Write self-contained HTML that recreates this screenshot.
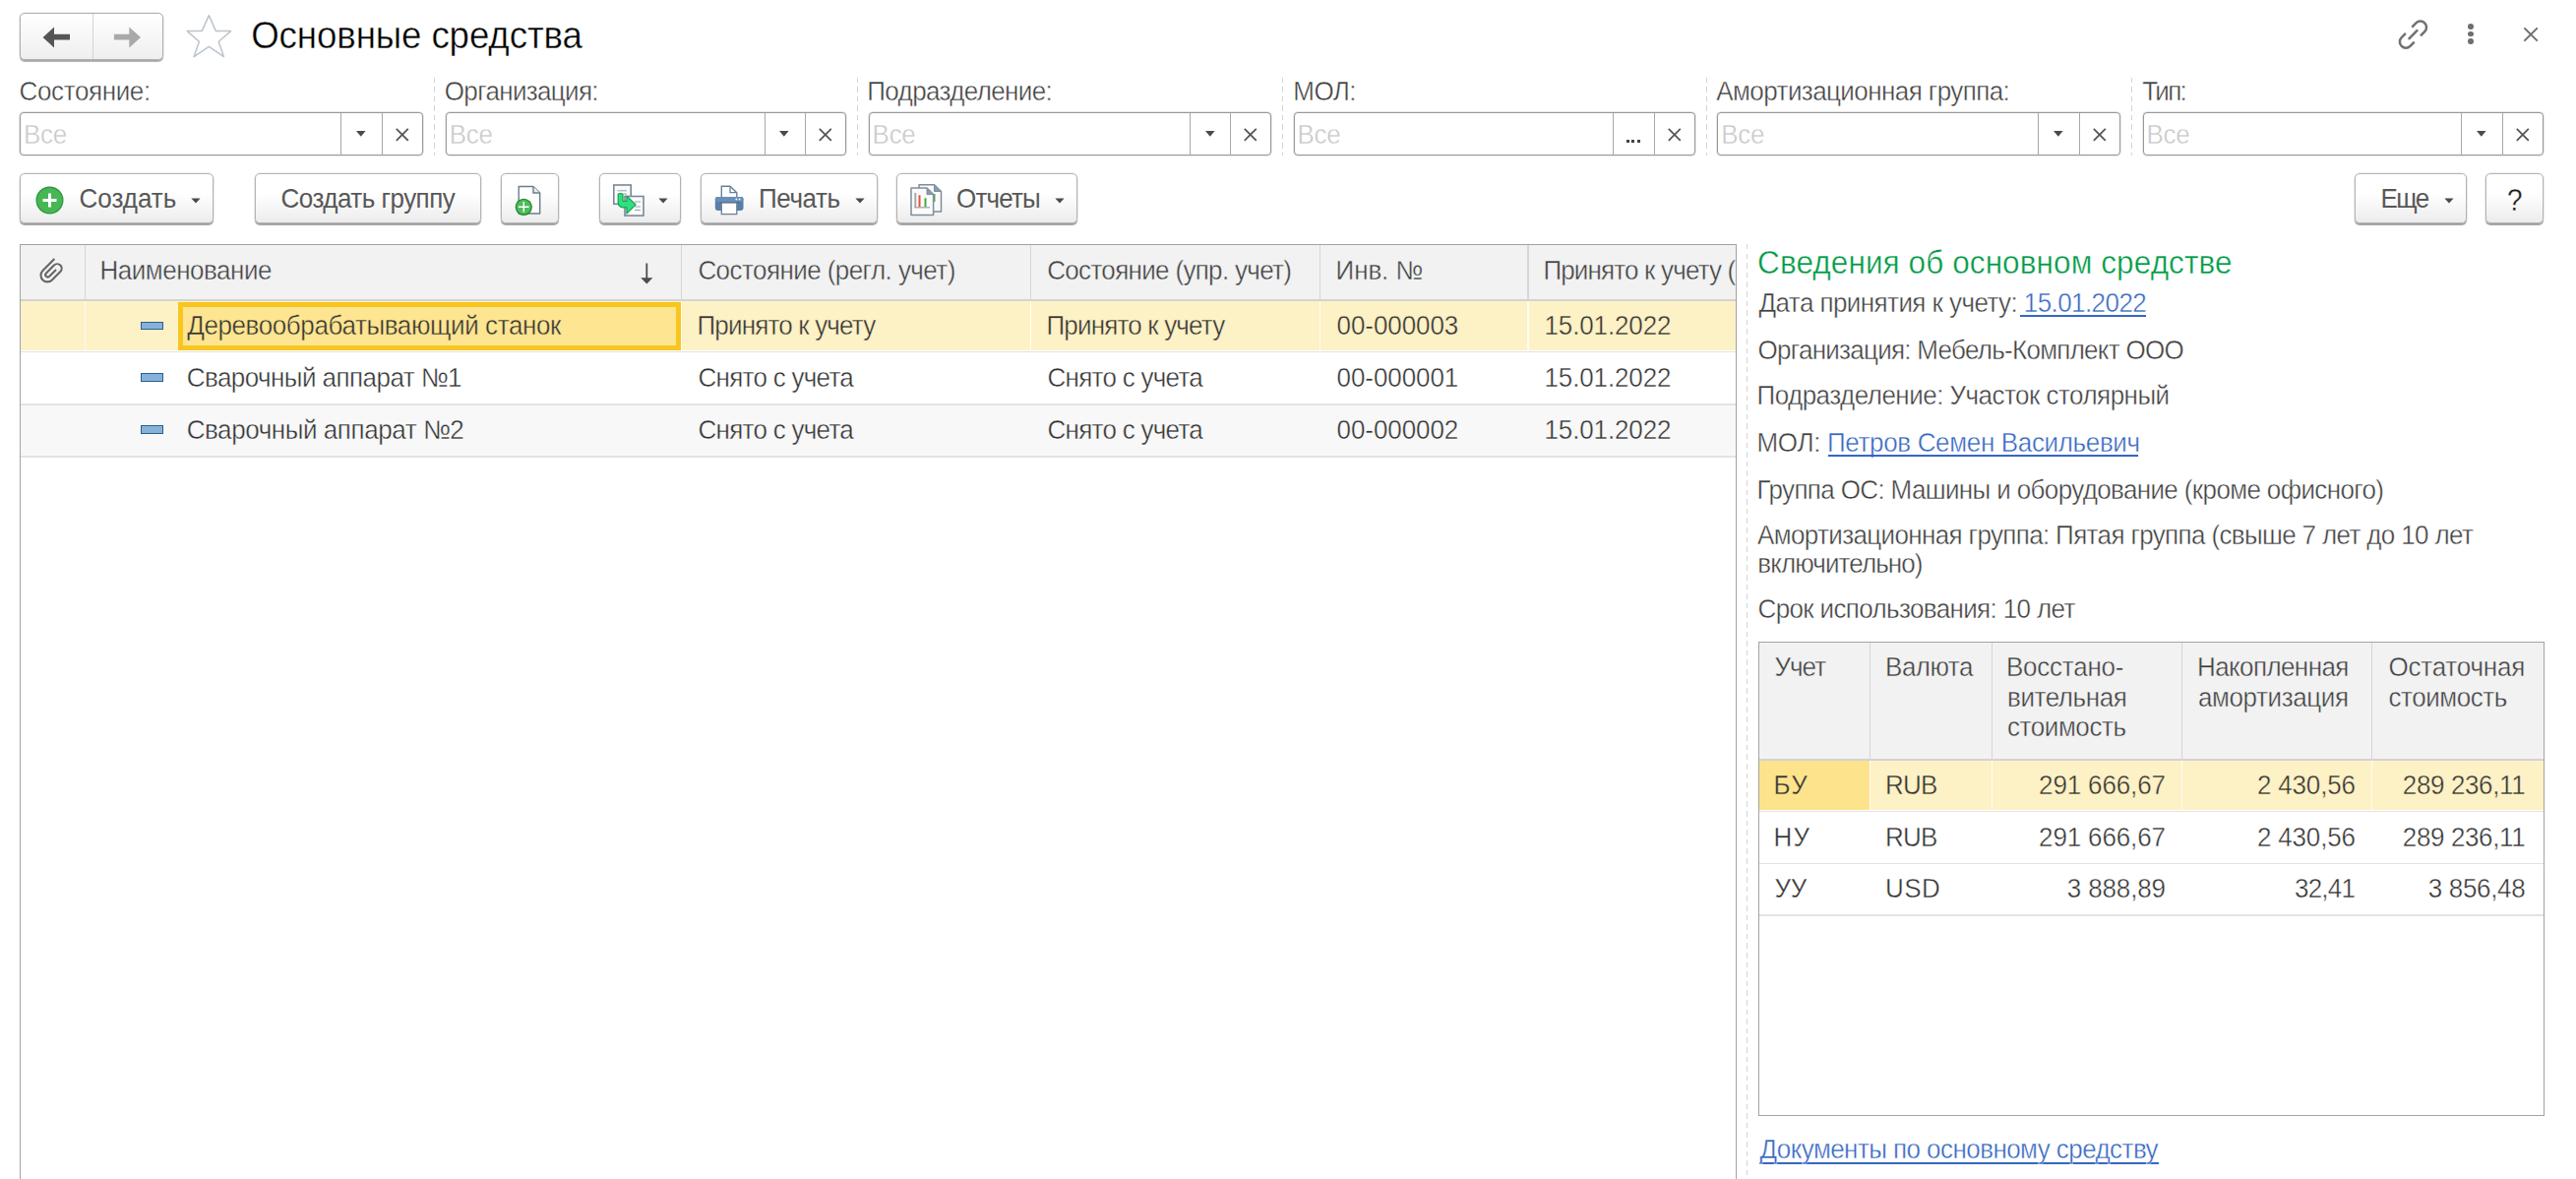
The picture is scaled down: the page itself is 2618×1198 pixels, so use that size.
<!DOCTYPE html>
<html><head><meta charset="utf-8"><title>Основные средства</title>
<style>
html,body{margin:0;padding:0;width:2618px;height:1198px;overflow:hidden;background:#fff;}
body{position:relative;font-family:'Liberation Sans', sans-serif;}
.t{position:absolute;white-space:nowrap;font-family:'Liberation Sans', sans-serif;}
</style></head><body>
<div style="position:absolute;left:20.0px;top:13.0px;width:146.0px;height:48.0px;box-sizing:border-box;border:1px solid #b0b0b0;border-radius:5px;background:linear-gradient(#ffffff,#efefef);box-shadow:0 0 0 0.6px rgba(0,0,0,0.10), 0 1.2px 0.8px rgba(0,0,0,0.3);"></div>
<div style="position:absolute;left:94.0px;top:14.0px;width:1.0px;height:46.0px;background:#d4d4d4;"></div>
<svg style="position:absolute;left:40.0px;top:24.0px;" width="36" height="28" viewBox="0 0 36 28"><path d="M3.6 14 L15 3.5 L15 10.8 L31 10.8 L31 16.4 L15 16.4 L15 24.5 Z" fill="#555"/></svg>
<svg style="position:absolute;left:112.0px;top:24.0px;" width="36" height="28" viewBox="0 0 36 28"><path d="M31 14 L19.3 3.5 L19.3 10.8 L3.9 10.8 L3.9 16.4 L19.3 16.4 L19.3 24.5 Z" fill="#a9a9a9"/></svg>
<svg style="position:absolute;left:186.0px;top:12.0px;" width="52" height="50" viewBox="0 0 52 50"><path d="M26.3 3.6 L33.4 19.6 L48.6 19.6 L36.2 30.2 L41.4 45.6 L26.3 35.4 L11.2 45.6 L16.4 30.2 L4.2 19.6 L19.2 19.6 Z" fill="none" stroke="#bcc4cc" stroke-width="1.5" stroke-linejoin="round"/></svg>
<div class="t" style="left:255.2px;top:19.4px;font-size:36.7px;line-height:36.7px;color:#000;letter-spacing:-0.119px;-webkit-text-stroke:0.4px #fff;transform:scaleY(1.05);transform-origin:0 31.07px;">Основные средства</div>
<svg style="position:absolute;left:2432.0px;top:15.0px;" width="40" height="40" viewBox="0 0 40 40"><g transform="translate(20.45 20.1) rotate(-45)" fill="none" stroke="#707070" stroke-width="2.5"><path d="M4.5 -6.2 L10.4 -6.2 A6.2 6.2 0 0 1 10.4 6.2 L4.5 6.2"/><path d="M-4.5 -6.2 L-10.4 -6.2 A6.2 6.2 0 0 0 -10.4 6.2 L-4.5 6.2"/><path d="M-6.6 0 L6.6 0"/></g></svg>
<div style="position:absolute;left:2508.1px;top:23.8px;width:5.8px;height:5.8px;border-radius:50%;background:#6e6e6e;"></div>
<div style="position:absolute;left:2508.1px;top:31.5px;width:5.8px;height:5.8px;border-radius:50%;background:#6e6e6e;"></div>
<div style="position:absolute;left:2508.1px;top:39.3px;width:5.8px;height:5.8px;border-radius:50%;background:#6e6e6e;"></div>
<svg style="position:absolute;left:2562.0px;top:25.0px;" width="20" height="20" viewBox="0 0 20 20"><path d="M3.4 3.4 L16.8 16.6 M16.8 3.4 L3.4 16.6" stroke="#6e6e6e" stroke-width="2"/></svg>
<div class="t" style="left:19.5px;top:80.3px;font-size:26px;line-height:26px;color:#404040;letter-spacing:-0.367px;-webkit-text-stroke:0.4px #fff;transform:scaleY(1.05);transform-origin:0 22.01px;">Состояние:</div>
<div style="position:absolute;left:20.0px;top:114.0px;width:410.0px;height:44.0px;box-sizing:border-box;border:1px solid #999;border-radius:4px;background:#fff;box-shadow:0 0 0 0.8px rgba(0,0,0,0.12);"></div>
<div style="position:absolute;left:346.2px;top:114.5px;width:1.0px;height:43.0px;background:#a8a8a8;"></div>
<div style="position:absolute;left:387.9px;top:114.5px;width:1.0px;height:43.0px;background:#a8a8a8;"></div>
<div class="t" style="left:24.0px;top:124.0px;font-size:26px;line-height:26px;color:#c8c8c8;letter-spacing:-0.3px;-webkit-text-stroke:0.4px #fff;transform:scaleY(1.05);transform-origin:0 22.01px;">Все</div>
<svg style="position:absolute;left:362.0px;top:133.0px;" width="10" height="7" viewBox="0 0 10 7"><path d="M0 0 L9.6 0 L4.8 5.8 Z" fill="#4a4a4a"/></svg>
<svg style="position:absolute;left:401.5px;top:129.5px;" width="14" height="14" viewBox="0 0 14 14"><path d="M0.8 0.8 L12.8 12.8 M12.8 0.8 L0.8 12.8" stroke="#555" stroke-width="1.8"/></svg>
<div style="position:absolute;left:440.9px;top:78.7px;width:1.6px;height:79.5px;background:repeating-linear-gradient(#d4d4d4 0 5.5px, transparent 5.5px 9.5px);"></div>
<div class="t" style="left:451.8px;top:80.3px;font-size:26px;line-height:26px;color:#404040;letter-spacing:-0.664px;-webkit-text-stroke:0.4px #fff;transform:scaleY(1.05);transform-origin:0 22.01px;">Организация:</div>
<div style="position:absolute;left:452.7px;top:114.0px;width:407.6px;height:44.0px;box-sizing:border-box;border:1px solid #999;border-radius:4px;background:#fff;box-shadow:0 0 0 0.8px rgba(0,0,0,0.12);"></div>
<div style="position:absolute;left:776.5px;top:114.5px;width:1.0px;height:43.0px;background:#a8a8a8;"></div>
<div style="position:absolute;left:818.2px;top:114.5px;width:1.0px;height:43.0px;background:#a8a8a8;"></div>
<div class="t" style="left:456.7px;top:124.0px;font-size:26px;line-height:26px;color:#c8c8c8;letter-spacing:-0.3px;-webkit-text-stroke:0.4px #fff;transform:scaleY(1.05);transform-origin:0 22.01px;">Все</div>
<svg style="position:absolute;left:792.3px;top:133.0px;" width="10" height="7" viewBox="0 0 10 7"><path d="M0 0 L9.6 0 L4.8 5.8 Z" fill="#4a4a4a"/></svg>
<svg style="position:absolute;left:831.8px;top:129.5px;" width="14" height="14" viewBox="0 0 14 14"><path d="M0.8 0.8 L12.8 12.8 M12.8 0.8 L0.8 12.8" stroke="#555" stroke-width="1.8"/></svg>
<div style="position:absolute;left:870.8px;top:78.7px;width:1.6px;height:79.5px;background:repeating-linear-gradient(#d4d4d4 0 5.5px, transparent 5.5px 9.5px);"></div>
<div class="t" style="left:881.3px;top:80.3px;font-size:26px;line-height:26px;color:#404040;letter-spacing:-0.631px;-webkit-text-stroke:0.4px #fff;transform:scaleY(1.05);transform-origin:0 22.01px;">Подразделение:</div>
<div style="position:absolute;left:882.6px;top:114.0px;width:409.9px;height:44.0px;box-sizing:border-box;border:1px solid #999;border-radius:4px;background:#fff;box-shadow:0 0 0 0.8px rgba(0,0,0,0.12);"></div>
<div style="position:absolute;left:1208.7px;top:114.5px;width:1.0px;height:43.0px;background:#a8a8a8;"></div>
<div style="position:absolute;left:1250.4px;top:114.5px;width:1.0px;height:43.0px;background:#a8a8a8;"></div>
<div class="t" style="left:886.6px;top:124.0px;font-size:26px;line-height:26px;color:#c8c8c8;letter-spacing:-0.3px;-webkit-text-stroke:0.4px #fff;transform:scaleY(1.05);transform-origin:0 22.01px;">Все</div>
<svg style="position:absolute;left:1224.5px;top:133.0px;" width="10" height="7" viewBox="0 0 10 7"><path d="M0 0 L9.6 0 L4.8 5.8 Z" fill="#4a4a4a"/></svg>
<svg style="position:absolute;left:1264.0px;top:129.5px;" width="14" height="14" viewBox="0 0 14 14"><path d="M0.8 0.8 L12.8 12.8 M12.8 0.8 L0.8 12.8" stroke="#555" stroke-width="1.8"/></svg>
<div style="position:absolute;left:1302.7px;top:78.7px;width:1.6px;height:79.5px;background:repeating-linear-gradient(#d4d4d4 0 5.5px, transparent 5.5px 9.5px);"></div>
<div class="t" style="left:1314.3px;top:80.3px;font-size:26px;line-height:26px;color:#404040;letter-spacing:-0.55px;-webkit-text-stroke:0.4px #fff;transform:scaleY(1.05);transform-origin:0 22.01px;">МОЛ:</div>
<div style="position:absolute;left:1314.5px;top:114.0px;width:408.5px;height:44.0px;box-sizing:border-box;border:1px solid #999;border-radius:4px;background:#fff;box-shadow:0 0 0 0.8px rgba(0,0,0,0.12);"></div>
<div style="position:absolute;left:1639.2px;top:114.5px;width:1.0px;height:43.0px;background:#a8a8a8;"></div>
<div style="position:absolute;left:1680.9px;top:114.5px;width:1.0px;height:43.0px;background:#a8a8a8;"></div>
<div class="t" style="left:1318.5px;top:124.0px;font-size:26px;line-height:26px;color:#c8c8c8;letter-spacing:-0.3px;-webkit-text-stroke:0.4px #fff;transform:scaleY(1.05);transform-origin:0 22.01px;">Все</div>
<div style="position:absolute;left:1653.0px;top:142.0px;width:3.0px;height:3.0px;background:#444;"></div>
<div style="position:absolute;left:1658.4px;top:142.0px;width:3.0px;height:3.0px;background:#444;"></div>
<div style="position:absolute;left:1663.8px;top:142.0px;width:3.0px;height:3.0px;background:#444;"></div>
<svg style="position:absolute;left:1694.5px;top:129.5px;" width="14" height="14" viewBox="0 0 14 14"><path d="M0.8 0.8 L12.8 12.8 M12.8 0.8 L0.8 12.8" stroke="#555" stroke-width="1.8"/></svg>
<div style="position:absolute;left:1733.5px;top:78.7px;width:1.6px;height:79.5px;background:repeating-linear-gradient(#d4d4d4 0 5.5px, transparent 5.5px 9.5px);"></div>
<div class="t" style="left:1744.3px;top:80.3px;font-size:26px;line-height:26px;color:#404040;letter-spacing:-0.577px;-webkit-text-stroke:0.4px #fff;transform:scaleY(1.05);transform-origin:0 22.01px;">Амортизационная группа:</div>
<div style="position:absolute;left:1745.3px;top:114.0px;width:409.7px;height:44.0px;box-sizing:border-box;border:1px solid #999;border-radius:4px;background:#fff;box-shadow:0 0 0 0.8px rgba(0,0,0,0.12);"></div>
<div style="position:absolute;left:2071.2px;top:114.5px;width:1.0px;height:43.0px;background:#a8a8a8;"></div>
<div style="position:absolute;left:2112.9px;top:114.5px;width:1.0px;height:43.0px;background:#a8a8a8;"></div>
<div class="t" style="left:1749.3px;top:124.0px;font-size:26px;line-height:26px;color:#c8c8c8;letter-spacing:-0.3px;-webkit-text-stroke:0.4px #fff;transform:scaleY(1.05);transform-origin:0 22.01px;">Все</div>
<svg style="position:absolute;left:2087.0px;top:133.0px;" width="10" height="7" viewBox="0 0 10 7"><path d="M0 0 L9.6 0 L4.8 5.8 Z" fill="#4a4a4a"/></svg>
<svg style="position:absolute;left:2126.5px;top:129.5px;" width="14" height="14" viewBox="0 0 14 14"><path d="M0.8 0.8 L12.8 12.8 M12.8 0.8 L0.8 12.8" stroke="#555" stroke-width="1.8"/></svg>
<div style="position:absolute;left:2165.7px;top:78.7px;width:1.6px;height:79.5px;background:repeating-linear-gradient(#d4d4d4 0 5.5px, transparent 5.5px 9.5px);"></div>
<div class="t" style="left:2177.3px;top:80.3px;font-size:26px;line-height:26px;color:#404040;letter-spacing:-1.7px;-webkit-text-stroke:0.4px #fff;transform:scaleY(1.05);transform-origin:0 22.01px;">Тип:</div>
<div style="position:absolute;left:2177.5px;top:114.0px;width:407.5px;height:44.0px;box-sizing:border-box;border:1px solid #999;border-radius:4px;background:#fff;box-shadow:0 0 0 0.8px rgba(0,0,0,0.12);"></div>
<div style="position:absolute;left:2501.2px;top:114.5px;width:1.0px;height:43.0px;background:#a8a8a8;"></div>
<div style="position:absolute;left:2542.9px;top:114.5px;width:1.0px;height:43.0px;background:#a8a8a8;"></div>
<div class="t" style="left:2181.5px;top:124.0px;font-size:26px;line-height:26px;color:#c8c8c8;letter-spacing:-0.3px;-webkit-text-stroke:0.4px #fff;transform:scaleY(1.05);transform-origin:0 22.01px;">Все</div>
<svg style="position:absolute;left:2517.0px;top:133.0px;" width="10" height="7" viewBox="0 0 10 7"><path d="M0 0 L9.6 0 L4.8 5.8 Z" fill="#4a4a4a"/></svg>
<svg style="position:absolute;left:2556.5px;top:129.5px;" width="14" height="14" viewBox="0 0 14 14"><path d="M0.8 0.8 L12.8 12.8 M12.8 0.8 L0.8 12.8" stroke="#555" stroke-width="1.8"/></svg>
<div style="position:absolute;left:20.3px;top:176.2px;width:197.0px;height:51.3px;box-sizing:border-box;border:1px solid #b4b4b4;border-radius:5px;background:linear-gradient(#ffffff 40%,#ececec);box-shadow:0 0 0 0.6px rgba(0,0,0,0.10), 0 1.2px 0.8px rgba(0,0,0,0.35);"></div>
<svg style="position:absolute;left:35.5px;top:189.0px;" width="29" height="29" viewBox="0 0 29 29"><circle cx="14.5" cy="14.5" r="14" fill="#2f9a3e"/><circle cx="14.5" cy="14.5" r="12.6" fill="#47b755"/><path d="M14.5 7.5 V21.5 M7.5 14.5 H21.5" stroke="#fff" stroke-width="3"/></svg>
<div class="t" style="left:80.5px;top:189.0px;font-size:26px;line-height:26px;color:#585858;letter-spacing:-0.017px;-webkit-text-stroke:0.4px transparent;transform:scaleY(1.05);transform-origin:0 22.01px;">Создать</div>
<svg style="position:absolute;left:193.7px;top:201.0px;" width="10" height="6" viewBox="0 0 10 6"><path d="M0.4 0.6 L9.6 0.6 L5 5.4 Z" fill="#4a4a4a"/></svg>
<div style="position:absolute;left:258.6px;top:176.2px;width:230.6px;height:51.3px;box-sizing:border-box;border:1px solid #b4b4b4;border-radius:5px;background:linear-gradient(#ffffff 40%,#ececec);box-shadow:0 0 0 0.6px rgba(0,0,0,0.10), 0 1.2px 0.8px rgba(0,0,0,0.35);"></div>
<div class="t" style="left:285.6px;top:189.0px;font-size:26px;line-height:26px;color:#585858;letter-spacing:-0.515px;-webkit-text-stroke:0.4px transparent;transform:scaleY(1.05);transform-origin:0 22.01px;">Создать группу</div>
<div style="position:absolute;left:508.5px;top:176.2px;width:59.2px;height:51.3px;box-sizing:border-box;border:1px solid #b4b4b4;border-radius:5px;background:linear-gradient(#ffffff 40%,#ececec);box-shadow:0 0 0 0.6px rgba(0,0,0,0.10), 0 1.2px 0.8px rgba(0,0,0,0.35);"></div>
<svg style="position:absolute;left:505.0px;top:175.0px;" width="60" height="55" viewBox="0 0 60 55"><path d="M22.2 14.5 H37 L43.7 21 V42 H22.2 Z" fill="#fff" stroke="#6a7c90" stroke-width="1.4" stroke-linejoin="round"/><path d="M37 14.5 V21 H43.7" fill="#e8ecf0" stroke="#6a7c90" stroke-width="1.4"/><circle cx="27.3" cy="35.3" r="8.6" fill="#1f8c2c"/><circle cx="27.3" cy="35.3" r="7.3" fill="#4fbd5e"/><path d="M27.3 30 V40.6 M22 35.3 H32.6" stroke="#fff" stroke-width="1.4"/></svg>
<div style="position:absolute;left:609.2px;top:176.2px;width:83.3px;height:51.3px;box-sizing:border-box;border:1px solid #b4b4b4;border-radius:5px;background:linear-gradient(#ffffff 40%,#ececec);box-shadow:0 0 0 0.6px rgba(0,0,0,0.10), 0 1.2px 0.8px rgba(0,0,0,0.35);"></div>
<svg style="position:absolute;left:605.0px;top:175.0px;" width="60" height="55" viewBox="0 0 60 55"><rect x="18.8" y="13" width="17.4" height="19.3" fill="#fbfbfb" stroke="#7a8899" stroke-width="1.6"/><path d="M22.5 18.8 H32 M22.5 22 H32" stroke="#98a4b2" stroke-width="1"/><rect x="30" y="24.5" width="19" height="19.6" fill="#fbfbfb" stroke="#7a8899" stroke-width="1.6"/><path d="M40 30 H46 M40 35 H46 M40 38.5 H46" stroke="#98a4b2" stroke-width="1"/><path d="M23.2 23.5 Q23.2 21.5 25.6 21.5 Q28 21.5 28 23.5 L28 29.5 L31.9 29.5 L31.9 24.2 L41.1 32.9 L31.9 42.1 L31.9 35.8 L28.5 35.8 Q23.2 35.8 23.2 30 Z" fill="#2ee082" stroke="#16a050" stroke-width="1.2" stroke-linejoin="round"/></svg>
<svg style="position:absolute;left:668.9px;top:201.0px;" width="10" height="6" viewBox="0 0 10 6"><path d="M0.4 0.6 L9.6 0.6 L5 5.4 Z" fill="#4a4a4a"/></svg>
<div style="position:absolute;left:711.5px;top:176.2px;width:180.7px;height:51.3px;box-sizing:border-box;border:1px solid #b4b4b4;border-radius:5px;background:linear-gradient(#ffffff 40%,#ececec);box-shadow:0 0 0 0.6px rgba(0,0,0,0.10), 0 1.2px 0.8px rgba(0,0,0,0.35);"></div>
<svg style="position:absolute;left:715.0px;top:180.0px;" width="45" height="45" viewBox="0 0 45 45"><path d="M18.3 9.2 H27 L33.8 15.7 V22 H18.3 Z" fill="#fff" stroke="#6a8098" stroke-width="1.4"/><path d="M27 9.2 V15.7 H33.8" fill="none" stroke="#6a8098" stroke-width="1.3"/><rect x="11.8" y="20" width="28.7" height="14" rx="3" fill="#587ea8"/><rect x="11.8" y="20" width="28.7" height="5" rx="2" fill="#6690bb"/><path d="M17 25.6 H36" stroke="#3f5f82" stroke-width="1.2"/><rect x="18.3" y="26" width="15.5" height="11.6" fill="#fff" stroke="#6a8098" stroke-width="1.3"/><circle cx="33.4" cy="22.5" r="0.9" fill="#fff"/><circle cx="36.6" cy="22.5" r="0.9" fill="#fff"/></svg>
<div class="t" style="left:771.0px;top:189.0px;font-size:26px;line-height:26px;color:#585858;letter-spacing:-0.44px;-webkit-text-stroke:0.4px transparent;transform:scaleY(1.05);transform-origin:0 22.01px;">Печать</div>
<svg style="position:absolute;left:869.2px;top:201.0px;" width="10" height="6" viewBox="0 0 10 6"><path d="M0.4 0.6 L9.6 0.6 L5 5.4 Z" fill="#4a4a4a"/></svg>
<div style="position:absolute;left:911.4px;top:176.2px;width:183.9px;height:51.3px;box-sizing:border-box;border:1px solid #b4b4b4;border-radius:5px;background:linear-gradient(#ffffff 40%,#ececec);box-shadow:0 0 0 0.6px rgba(0,0,0,0.10), 0 1.2px 0.8px rgba(0,0,0,0.35);"></div>
<svg style="position:absolute;left:915.0px;top:180.0px;" width="45" height="45" viewBox="0 0 45 45"><path d="M19 7.8 H34.5 L41.5 14.5 V35 H19 Z" fill="#fbfbfb" stroke="#7d8d9d" stroke-width="1.5" stroke-linejoin="round"/><path d="M34.5 7.8 V14.5 H41.5" fill="#8a9aab" stroke="#7d8d9d" stroke-width="1"/><path d="M34.5 17 V25" stroke="#4caf50" stroke-width="2"/><path d="M11 11 H27 L33.6 17.6 V38.5 H11 Z" fill="#fbfbfb" stroke="#7d8d9d" stroke-width="1.5" stroke-linejoin="round"/><path d="M27 11 V17.6 H33.6" fill="#8a9aab" stroke="#7d8d9d" stroke-width="1"/><path d="M15.3 16 V30.6" stroke="#a8a8a8" stroke-width="2"/><path d="M19.5 18.3 V30.3" stroke="#e8503a" stroke-width="2"/><path d="M25.5 21.3 V30.3" stroke="#3cae3c" stroke-width="2"/><path d="M14 30.8 H30" stroke="#a0a0a0" stroke-width="1.2"/></svg>
<div class="t" style="left:972.0px;top:189.0px;font-size:26px;line-height:26px;color:#585858;letter-spacing:-0.82px;-webkit-text-stroke:0.4px transparent;transform:scaleY(1.05);transform-origin:0 22.01px;">Отчеты</div>
<svg style="position:absolute;left:1072.0px;top:201.0px;" width="10" height="6" viewBox="0 0 10 6"><path d="M0.4 0.6 L9.6 0.6 L5 5.4 Z" fill="#4a4a4a"/></svg>
<div style="position:absolute;left:2393.1px;top:176.2px;width:114.1px;height:51.3px;box-sizing:border-box;border:1px solid #b4b4b4;border-radius:5px;background:linear-gradient(#ffffff 40%,#ececec);box-shadow:0 0 0 0.6px rgba(0,0,0,0.10), 0 1.2px 0.8px rgba(0,0,0,0.35);"></div>
<div class="t" style="left:2419.5px;top:189.0px;font-size:26px;line-height:26px;color:#585858;letter-spacing:-1.65px;-webkit-text-stroke:0.4px transparent;transform:scaleY(1.05);transform-origin:0 22.01px;">Еще</div>
<svg style="position:absolute;left:2483.6px;top:201.0px;" width="10" height="6" viewBox="0 0 10 6"><path d="M0.4 0.6 L9.6 0.6 L5 5.4 Z" fill="#4a4a4a"/></svg>
<div style="position:absolute;left:2525.8px;top:176.2px;width:59.6px;height:51.3px;box-sizing:border-box;border:1px solid #b4b4b4;border-radius:5px;background:linear-gradient(#ffffff 40%,#ececec);box-shadow:0 0 0 0.6px rgba(0,0,0,0.10), 0 1.2px 0.8px rgba(0,0,0,0.35);"></div>
<div class="t" style="left:2548.3px;top:188.2px;font-size:31px;line-height:31px;color:#1a1a1a;-webkit-text-stroke:0.3px #f7f7f7;transform:scaleX(0.9);transform-origin:left top;">?</div>
<div style="position:absolute;left:20.0px;top:248.0px;width:1744.5px;height:955.0px;box-sizing:border-box;border:1px solid #a3a3a3;border-bottom:none;background:#fff;"></div>
<div style="position:absolute;left:21.0px;top:249.0px;width:1742.5px;height:55.5px;background:#f2f2f2;"></div>
<div style="position:absolute;left:21.0px;top:304.0px;width:1742.5px;height:1.5px;background:#d3d3d3;"></div>
<div style="position:absolute;left:85.5px;top:249.0px;width:1.2px;height:55.5px;background:#d6d6d6;"></div>
<div style="position:absolute;left:691.5px;top:249.0px;width:1.2px;height:55.5px;background:#d6d6d6;"></div>
<div style="position:absolute;left:1046.8px;top:249.0px;width:1.2px;height:55.5px;background:#d6d6d6;"></div>
<div style="position:absolute;left:1341.3px;top:249.0px;width:1.2px;height:55.5px;background:#d6d6d6;"></div>
<div style="position:absolute;left:1552.4px;top:249.0px;width:1.2px;height:55.5px;background:#d6d6d6;"></div>
<div style="position:absolute;left:21.0px;top:305.5px;width:1742.5px;height:50.5px;background:#fdf1c6;"></div>
<div style="position:absolute;left:85.5px;top:305.5px;width:1.2px;height:50.5px;background:#ffffff;opacity:0.8;"></div>
<div style="position:absolute;left:691.5px;top:305.5px;width:1.2px;height:50.5px;background:#ffffff;opacity:0.8;"></div>
<div style="position:absolute;left:1046.8px;top:305.5px;width:1.2px;height:50.5px;background:#ffffff;opacity:0.8;"></div>
<div style="position:absolute;left:1341.3px;top:305.5px;width:1.2px;height:50.5px;background:#ffffff;opacity:0.8;"></div>
<div style="position:absolute;left:1552.4px;top:305.5px;width:1.2px;height:50.5px;background:#ffffff;opacity:0.8;"></div>
<div style="position:absolute;left:21.0px;top:358.5px;width:1742.5px;height:52.0px;background:#ffffff;"></div>
<div style="position:absolute;left:21.0px;top:411.5px;width:1742.5px;height:52.0px;background:#f8f8f8;"></div>
<div style="position:absolute;left:21.0px;top:356.8px;width:1742.5px;height:1.5px;background:#e3e3e3;"></div>
<div style="position:absolute;left:21.0px;top:410.0px;width:1742.5px;height:1.5px;background:#e3e3e3;"></div>
<div style="position:absolute;left:21.0px;top:463.0px;width:1742.5px;height:1.5px;background:#e3e3e3;"></div>
<div style="position:absolute;left:181.0px;top:307.0px;width:511.0px;height:48.5px;box-sizing:border-box;border:5px solid #f8c61f;background:#fde591;"></div>
<svg style="position:absolute;left:34.0px;top:256.0px;" width="38" height="38" viewBox="0 0 38 38"><g transform="translate(19.0 18.9) rotate(-45)" fill="none" stroke="#666" stroke-width="2.1"><path d="M10 -6.7 L-6.8 -6.7 A6.7 6.7 0 0 0 -6.8 6.7 L5.1 6.7 A4.55 4.55 0 0 0 5.1 -2.4 L-6.4 -2.4 A2.28 2.28 0 0 0 -6.4 2.15 L3.57 2.15"/></g></svg>
<div class="t" style="left:101.5px;top:262.3px;font-size:26px;line-height:26px;color:#404040;letter-spacing:-0.482px;-webkit-text-stroke:0.4px #f2f2f2;transform:scaleY(1.05);transform-origin:0 22.01px;">Наименование</div>
<svg style="position:absolute;left:645.0px;top:262.0px;" width="24" height="30" viewBox="0 0 24 30"><path d="M12.3 5.5 V23" stroke="#4d4d4d" stroke-width="1.8"/><path d="M6.2 20.3 L12.3 26.6 L18.4 20.3 Z" fill="#4d4d4d"/></svg>
<div class="t" style="left:709.4px;top:262.3px;font-size:26px;line-height:26px;color:#404040;letter-spacing:-0.562px;-webkit-text-stroke:0.4px #f2f2f2;transform:scaleY(1.05);transform-origin:0 22.01px;">Состояние (регл. учет)</div>
<div class="t" style="left:1064.2px;top:262.3px;font-size:26px;line-height:26px;color:#404040;letter-spacing:-0.675px;-webkit-text-stroke:0.4px #f2f2f2;transform:scaleY(1.05);transform-origin:0 22.01px;">Состояние (упр. учет)</div>
<div class="t" style="left:1357.6px;top:262.3px;font-size:26px;line-height:26px;color:#404040;letter-spacing:-0.12px;-webkit-text-stroke:0.4px #f2f2f2;transform:scaleY(1.05);transform-origin:0 22.01px;">Инв. №</div>
<div style="position:absolute;left:1553px;top:249px;width:210.5px;height:55px;overflow:hidden;">
<div class="t" style="left:15.4px;top:13.3px;font-size:26px;line-height:26px;color:#404040;letter-spacing:-0.836px;-webkit-text-stroke:0.4px #f2f2f2;transform:scaleY(1.05);transform-origin:0 22.01px;">Принято к учету (регл.)</div>
</div>
<div style="position:absolute;left:143.0px;top:326.5px;width:22.5px;height:8.5px;box-sizing:border-box;border:1.5px solid #2f5f8c;background:#86b2da;"></div>
<div class="t" style="left:190.2px;top:318.4px;font-size:26px;line-height:26px;color:#333333;letter-spacing:-0.392px;-webkit-text-stroke:0.4px #fde591;transform:scaleY(1.05);transform-origin:0 22.01px;">Деревообрабатывающий станок</div>
<div class="t" style="left:708.5px;top:318.4px;font-size:26px;line-height:26px;color:#333333;letter-spacing:-0.836px;-webkit-text-stroke:0.4px #fdf1c6;transform:scaleY(1.05);transform-origin:0 22.01px;">Принято к учету</div>
<div class="t" style="left:1063.5px;top:318.4px;font-size:26px;line-height:26px;color:#333333;letter-spacing:-0.836px;-webkit-text-stroke:0.4px #fdf1c6;transform:scaleY(1.05);transform-origin:0 22.01px;">Принято к учету</div>
<div class="t" style="left:1358.6px;top:318.4px;font-size:26px;line-height:26px;color:#333333;letter-spacing:-0.088px;-webkit-text-stroke:0.4px #fdf1c6;transform:scaleY(1.05);transform-origin:0 22.01px;">00-000003</div>
<div class="t" style="left:1569.5px;top:318.4px;font-size:26px;line-height:26px;color:#333333;letter-spacing:-0.133px;-webkit-text-stroke:0.4px #fdf1c6;transform:scaleY(1.05);transform-origin:0 22.01px;">15.01.2022</div>
<div style="position:absolute;left:143.0px;top:379.4px;width:22.5px;height:8.5px;box-sizing:border-box;border:1.5px solid #2f5f8c;background:#86b2da;"></div>
<div class="t" style="left:189.7px;top:371.2px;font-size:26px;line-height:26px;color:#333333;letter-spacing:-0.553px;-webkit-text-stroke:0.4px #ffffff;transform:scaleY(1.05);transform-origin:0 22.01px;">Сварочный аппарат №1</div>
<div class="t" style="left:709.5px;top:371.2px;font-size:26px;line-height:26px;color:#333333;letter-spacing:-0.725px;-webkit-text-stroke:0.4px #ffffff;transform:scaleY(1.05);transform-origin:0 22.01px;">Снято с учета</div>
<div class="t" style="left:1064.5px;top:371.2px;font-size:26px;line-height:26px;color:#333333;letter-spacing:-0.725px;-webkit-text-stroke:0.4px #ffffff;transform:scaleY(1.05);transform-origin:0 22.01px;">Снято с учета</div>
<div class="t" style="left:1358.6px;top:371.2px;font-size:26px;line-height:26px;color:#333333;letter-spacing:-0.088px;-webkit-text-stroke:0.4px #ffffff;transform:scaleY(1.05);transform-origin:0 22.01px;">00-000001</div>
<div class="t" style="left:1569.5px;top:371.2px;font-size:26px;line-height:26px;color:#333333;letter-spacing:-0.133px;-webkit-text-stroke:0.4px #ffffff;transform:scaleY(1.05);transform-origin:0 22.01px;">15.01.2022</div>
<div style="position:absolute;left:143.0px;top:432.3px;width:22.5px;height:8.5px;box-sizing:border-box;border:1.5px solid #2f5f8c;background:#86b2da;"></div>
<div class="t" style="left:189.7px;top:424.0px;font-size:26px;line-height:26px;color:#333333;letter-spacing:-0.432px;-webkit-text-stroke:0.4px #f8f8f8;transform:scaleY(1.05);transform-origin:0 22.01px;">Сварочный аппарат №2</div>
<div class="t" style="left:709.5px;top:424.0px;font-size:26px;line-height:26px;color:#333333;letter-spacing:-0.725px;-webkit-text-stroke:0.4px #f8f8f8;transform:scaleY(1.05);transform-origin:0 22.01px;">Снято с учета</div>
<div class="t" style="left:1064.5px;top:424.0px;font-size:26px;line-height:26px;color:#333333;letter-spacing:-0.725px;-webkit-text-stroke:0.4px #f8f8f8;transform:scaleY(1.05);transform-origin:0 22.01px;">Снято с учета</div>
<div class="t" style="left:1358.6px;top:424.0px;font-size:26px;line-height:26px;color:#333333;letter-spacing:-0.088px;-webkit-text-stroke:0.4px #f8f8f8;transform:scaleY(1.05);transform-origin:0 22.01px;">00-000002</div>
<div class="t" style="left:1569.5px;top:424.0px;font-size:26px;line-height:26px;color:#333333;letter-spacing:-0.133px;-webkit-text-stroke:0.4px #f8f8f8;transform:scaleY(1.05);transform-origin:0 22.01px;">15.01.2022</div>
<div style="position:absolute;left:1774.7px;top:248.1px;width:1.6px;height:950.0px;background:repeating-linear-gradient(#d4d4d4 0 5.5px, transparent 5.5px 9.6px);"></div>
<div class="t" style="left:1786.1px;top:251.5px;font-size:31.5px;line-height:31.5px;color:#009a46;letter-spacing:0.093px;-webkit-text-stroke:0.4px #fff;transform:scaleY(1.05);transform-origin:0 26.66px;">Сведения об основном средстве</div>
<div class="t" style="left:1787.5px;top:294.6px;font-size:26px;line-height:26px;color:#404040;letter-spacing:-0.572px;-webkit-text-stroke:0.4px #fff;transform:scaleY(1.05);transform-origin:0 22.01px;">Дата принятия к учету: <span class="lk" style="color:#3567c2;">15.01.2022</span></div>
<div class="t" style="left:1786.5px;top:342.6px;font-size:26px;line-height:26px;color:#404040;letter-spacing:-0.723px;-webkit-text-stroke:0.4px #fff;transform:scaleY(1.05);transform-origin:0 22.01px;">Организация: Мебель-Комплект ООО</div>
<div class="t" style="left:1785.5px;top:389.3px;font-size:26px;line-height:26px;color:#404040;letter-spacing:-0.526px;-webkit-text-stroke:0.4px #fff;transform:scaleY(1.05);transform-origin:0 22.01px;">Подразделение: Участок столярный</div>
<div class="t" style="left:1785.5px;top:437.0px;font-size:26px;line-height:26px;color:#404040;letter-spacing:-0.341px;-webkit-text-stroke:0.4px #fff;transform:scaleY(1.05);transform-origin:0 22.01px;">МОЛ: <span class="lk" style="color:#3567c2;">Петров Семен Васильевич</span></div>
<div class="t" style="left:1785.5px;top:485.0px;font-size:26px;line-height:26px;color:#404040;letter-spacing:-0.633px;-webkit-text-stroke:0.4px #fff;transform:scaleY(1.05);transform-origin:0 22.01px;">Группа ОС: Машины и оборудование (кроме офисного)</div>
<div class="t" style="left:1786.1px;top:531.4px;font-size:26px;line-height:26px;color:#404040;letter-spacing:-0.643px;-webkit-text-stroke:0.4px #fff;transform:scaleY(1.05);transform-origin:0 22.01px;">Амортизационная группа: Пятая группа (свыше 7 лет до 10 лет</div>
<div class="t" style="left:1786.3px;top:560.3px;font-size:26px;line-height:26px;color:#404040;letter-spacing:-0.908px;-webkit-text-stroke:0.4px #fff;transform:scaleY(1.05);transform-origin:0 22.01px;">включительно)</div>
<div class="t" style="left:1786.5px;top:605.8px;font-size:26px;line-height:26px;color:#404040;letter-spacing:-0.64px;-webkit-text-stroke:0.4px #fff;transform:scaleY(1.05);transform-origin:0 22.01px;">Срок использования: 10 лет</div>
<div style="position:absolute;left:1787.0px;top:651.5px;width:798.5px;height:482.0px;box-sizing:border-box;border:1px solid #a3a3a3;background:#fff;"></div>
<div style="position:absolute;left:1788.0px;top:652.5px;width:796.5px;height:120.0px;background:#f2f2f2;"></div>
<div style="position:absolute;left:1788.0px;top:771.2px;width:796.5px;height:1.5px;background:#d3d3d3;"></div>
<div style="position:absolute;left:1899.8px;top:652.5px;width:1.2px;height:120.0px;background:#d6d6d6;"></div>
<div style="position:absolute;left:2023.5px;top:652.5px;width:1.2px;height:120.0px;background:#d6d6d6;"></div>
<div style="position:absolute;left:2216.8px;top:652.5px;width:1.2px;height:120.0px;background:#d6d6d6;"></div>
<div style="position:absolute;left:2410.1px;top:652.5px;width:1.2px;height:120.0px;background:#d6d6d6;"></div>
<div style="position:absolute;left:1788.0px;top:773.0px;width:796.5px;height:50.0px;background:#fdf1c6;"></div>
<div style="position:absolute;left:1788.0px;top:773.0px;width:111.8px;height:50.0px;background:#fde38c;"></div>
<div style="position:absolute;left:1899.8px;top:773.0px;width:1.2px;height:50.0px;background:#fff;opacity:0.8;"></div>
<div style="position:absolute;left:2023.5px;top:773.0px;width:1.2px;height:50.0px;background:#fff;opacity:0.8;"></div>
<div style="position:absolute;left:2216.8px;top:773.0px;width:1.2px;height:50.0px;background:#fff;opacity:0.8;"></div>
<div style="position:absolute;left:2410.1px;top:773.0px;width:1.2px;height:50.0px;background:#fff;opacity:0.8;"></div>
<div style="position:absolute;left:1788.0px;top:823.8px;width:796.5px;height:1.5px;background:#e3e3e3;"></div>
<div style="position:absolute;left:1788.0px;top:876.7px;width:796.5px;height:1.5px;background:#e3e3e3;"></div>
<div style="position:absolute;left:1788.0px;top:929.4px;width:796.5px;height:1.5px;background:#e3e3e3;"></div>
<div class="t" style="left:1803.4px;top:665.0px;font-size:26px;line-height:26px;color:#404040;letter-spacing:-0.967px;-webkit-text-stroke:0.4px #f2f2f2;transform:scaleY(1.05);transform-origin:0 22.01px;">Учет</div>
<div class="t" style="left:1916.1px;top:665.0px;font-size:26px;line-height:26px;color:#404040;letter-spacing:-0.54px;-webkit-text-stroke:0.4px #f2f2f2;transform:scaleY(1.05);transform-origin:0 22.01px;">Валюта</div>
<div class="t" style="left:2039.0px;top:665.0px;font-size:26px;line-height:26px;color:#404040;letter-spacing:-0.25px;-webkit-text-stroke:0.4px #f2f2f2;transform:scaleY(1.05);transform-origin:0 22.01px;">Восстано-</div>
<div class="t" style="left:2040.0px;top:695.6px;font-size:26px;line-height:26px;color:#404040;letter-spacing:-0.425px;-webkit-text-stroke:0.4px #f2f2f2;transform:scaleY(1.05);transform-origin:0 22.01px;">вительная</div>
<div class="t" style="left:2040.0px;top:726.1px;font-size:26px;line-height:26px;color:#404040;letter-spacing:-0.425px;-webkit-text-stroke:0.4px #f2f2f2;transform:scaleY(1.05);transform-origin:0 22.01px;">стоимость</div>
<div class="t" style="left:2233.0px;top:665.0px;font-size:26px;line-height:26px;color:#404040;letter-spacing:-0.6px;-webkit-text-stroke:0.4px #f2f2f2;transform:scaleY(1.05);transform-origin:0 22.01px;">Накопленная</div>
<div class="t" style="left:2234.0px;top:695.6px;font-size:26px;line-height:26px;color:#404040;letter-spacing:-0.4px;-webkit-text-stroke:0.4px #f2f2f2;transform:scaleY(1.05);transform-origin:0 22.01px;">амортизация</div>
<div class="t" style="left:2427.4px;top:665.0px;font-size:26px;line-height:26px;color:#404040;letter-spacing:-0.2px;-webkit-text-stroke:0.4px #f2f2f2;transform:scaleY(1.05);transform-origin:0 22.01px;">Остаточная</div>
<div class="t" style="left:2427.4px;top:695.6px;font-size:26px;line-height:26px;color:#404040;letter-spacing:-0.425px;-webkit-text-stroke:0.4px #f2f2f2;transform:scaleY(1.05);transform-origin:0 22.01px;">стоимость</div>
<div class="t" style="left:1802.4px;top:784.7px;font-size:26px;line-height:26px;color:#333333;letter-spacing:1.3px;-webkit-text-stroke:0.4px #fde38c;transform:scaleY(1.05);transform-origin:0 22.01px;">БУ</div>
<div class="t" style="left:1916.1px;top:784.7px;font-size:26px;line-height:26px;color:#333333;letter-spacing:-0.8px;-webkit-text-stroke:0.4px #fdf1c6;transform:scaleY(1.05);transform-origin:0 22.01px;">RUB</div>
<div class="t" style="left:2072.1px;top:784.7px;font-size:26px;line-height:26px;color:#333333;letter-spacing:-0.144px;-webkit-text-stroke:0.4px #fdf1c6;transform:scaleY(1.05);transform-origin:0 22.01px;">291 666,67</div>
<div class="t" style="left:2293.9px;top:784.7px;font-size:26px;line-height:26px;color:#333333;letter-spacing:-0.157px;-webkit-text-stroke:0.4px #fdf1c6;transform:scaleY(1.05);transform-origin:0 22.01px;">2 430,56</div>
<div class="t" style="left:2441.8px;top:784.7px;font-size:26px;line-height:26px;color:#333333;letter-spacing:-0.367px;-webkit-text-stroke:0.4px #fdf1c6;transform:scaleY(1.05);transform-origin:0 22.01px;">289 236,11</div>
<div class="t" style="left:1802.4px;top:837.5px;font-size:26px;line-height:26px;color:#333333;letter-spacing:1.3px;-webkit-text-stroke:0.4px #ffffff;transform:scaleY(1.05);transform-origin:0 22.01px;">НУ</div>
<div class="t" style="left:1916.1px;top:837.5px;font-size:26px;line-height:26px;color:#333333;letter-spacing:-0.8px;-webkit-text-stroke:0.4px #ffffff;transform:scaleY(1.05);transform-origin:0 22.01px;">RUB</div>
<div class="t" style="left:2072.1px;top:837.5px;font-size:26px;line-height:26px;color:#333333;letter-spacing:-0.144px;-webkit-text-stroke:0.4px #ffffff;transform:scaleY(1.05);transform-origin:0 22.01px;">291 666,67</div>
<div class="t" style="left:2293.9px;top:837.5px;font-size:26px;line-height:26px;color:#333333;letter-spacing:-0.157px;-webkit-text-stroke:0.4px #ffffff;transform:scaleY(1.05);transform-origin:0 22.01px;">2 430,56</div>
<div class="t" style="left:2441.8px;top:837.5px;font-size:26px;line-height:26px;color:#333333;letter-spacing:-0.367px;-webkit-text-stroke:0.4px #ffffff;transform:scaleY(1.05);transform-origin:0 22.01px;">289 236,11</div>
<div class="t" style="left:1803.4px;top:890.3px;font-size:26px;line-height:26px;color:#333333;letter-spacing:-0.2px;-webkit-text-stroke:0.4px #ffffff;transform:scaleY(1.05);transform-origin:0 22.01px;">УУ</div>
<div class="t" style="left:1916.1px;top:890.3px;font-size:26px;line-height:26px;color:#333333;letter-spacing:0.45px;-webkit-text-stroke:0.4px #ffffff;transform:scaleY(1.05);transform-origin:0 22.01px;">USD</div>
<div class="t" style="left:2100.8px;top:890.3px;font-size:26px;line-height:26px;color:#333333;letter-spacing:-0.143px;-webkit-text-stroke:0.4px #ffffff;transform:scaleY(1.05);transform-origin:0 22.01px;">3 888,89</div>
<div class="t" style="left:2332.0px;top:890.3px;font-size:26px;line-height:26px;color:#333333;letter-spacing:-0.8px;-webkit-text-stroke:0.4px #ffffff;transform:scaleY(1.05);transform-origin:0 22.01px;">32,41</div>
<div class="t" style="left:2467.8px;top:890.3px;font-size:26px;line-height:26px;color:#333333;letter-spacing:-0.329px;-webkit-text-stroke:0.4px #ffffff;transform:scaleY(1.05);transform-origin:0 22.01px;">3 856,48</div>
<div style="position:absolute;left:2053.4px;top:319.8px;width:127.9px;height:1.9px;background:#3567c2;"></div>
<div style="position:absolute;left:1858.2px;top:462.2px;width:315.1px;height:1.9px;background:#3567c2;"></div>
<div style="position:absolute;left:1787.9px;top:1180.8px;width:405.7px;height:1.9px;background:#3567c2;"></div>
<div class="t" style="left:1788.4px;top:1155.3px;font-size:26px;line-height:26px;color:#3567c2;letter-spacing:-0.56px;-webkit-text-stroke:0.4px #fff;transform:scaleY(1.05);transform-origin:0 22.01px;"><span class="lk">Документы по основному средству</span></div>
</body></html>
